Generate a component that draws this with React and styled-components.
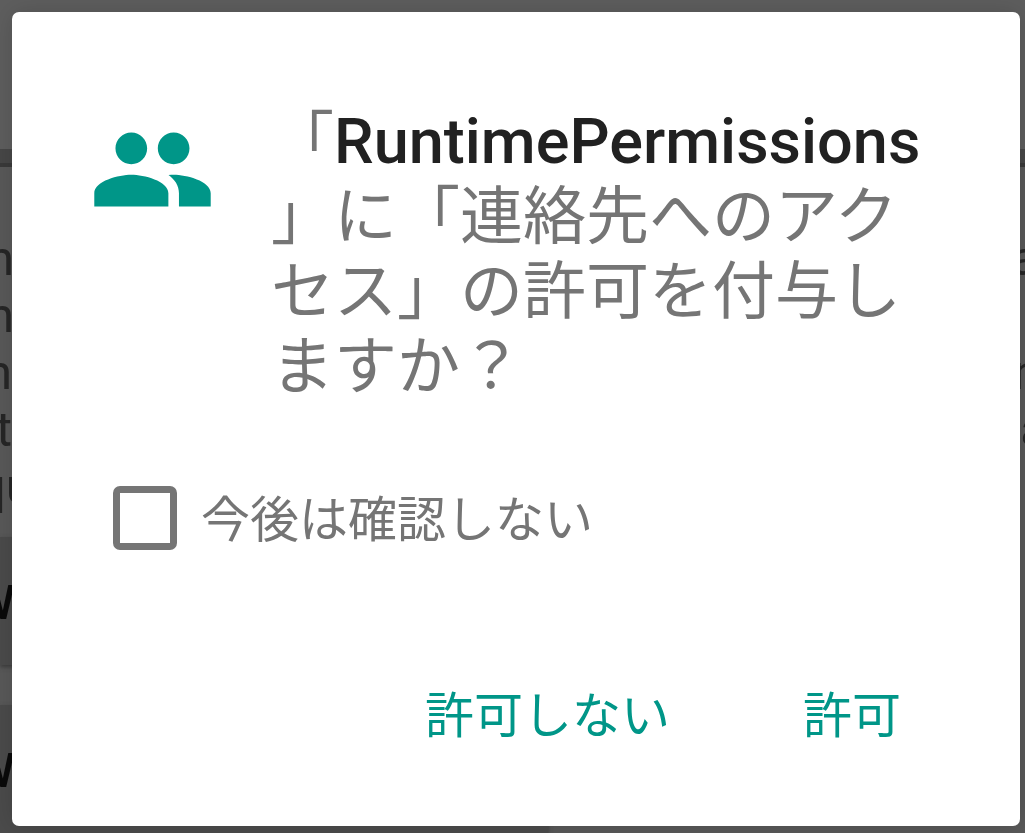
import React from "react";
import styled, { createGlobalStyle } from "styled-components";

const Global = createGlobalStyle`
  *, *::before, *::after { box-sizing: border-box; }
  body { margin: 0; background: #595959; font-family: Roboto, "Noto Sans CJK JP", sans-serif; }
`;

const Screen = styled.div`
  display: grid;
  min-height: 100vh;
  overflow: hidden;
  > * { grid-area: 1 / 1; min-width: 0; }
`;

const Backdrop = styled.div`
  overflow: hidden;
  background: #595959;
`;

const AppBar = styled.div`
  height: 149px;
  background: #5e5e5e;
`;

const Divider = styled.div`
  height: 18px;
  background: #474747;
  border-bottom: 4px solid #3a3a3a;
`;

const Copy = styled.div`
  padding-top: 63px;
  height: 370px;
  color: #262626;
  font-size: 49px;
  line-height: 57px;
`;

const CopyLine = styled.div`
  display: flex;
  justify-content: space-between;
  height: 57px;
  white-space: nowrap;
`;

const Fragment = styled.span`
  margin-left: ${(p) => p.$start || 0}px;
  margin-right: ${(p) => p.$end || 0}px;
`;

const Panel = styled.div`
  width: 548px;
  height: 128px;
  margin-bottom: 40px;
  background: #4b4b4b;
  box-shadow: 0 2px 4px #3c3c3c;
  color: #0a0a0a;
  font-size: 49px;
  font-weight: 500;
  line-height: 132px;
  text-indent: -28px;
`;

const Dialog = styled.section`
  position: relative;
  display: flex;
  flex-direction: column;
  align-self: start;
  margin: 12px 5px 7px 12px;
  padding: 92px 80px 73px 77px;
  border-radius: 7px;
  background: #fff;
  color: #757575;
  box-shadow: 0 0 24px rgba(0, 0, 0, 0.15);
`;

const Heading = styled.div`
  display: flex;
  gap: 55px;
`;

const PeopleIcon = styled.svg`
  flex: none;
  width: 127px;
  height: 127px;
  margin-top: 2px;
  fill: #009688;
`;

const Title = styled.h1`
  margin: 0;
  font-size: 63px;
  font-weight: 400;
  line-height: 75px;
  white-space: nowrap;
`;

const AppName = styled.strong`
  color: #212121;
  font-weight: 500;
`;

const Option = styled.label`
  display: flex;
  align-items: center;
  align-self: start;
  gap: 24px;
  margin: 75px 0 0 24px;
  font-size: 49px;
  line-height: 72px;
`;

const OptionText = styled.span`
  padding-top: 6px;
`;

const Checkbox = styled.input`
  appearance: none;
  width: 64px;
  height: 64px;
  margin: 0;
  border: 7px solid #757575;
  border-radius: 7px;
  &:checked { background: #009688; }
`;

const Actions = styled.div`
  display: flex;
  justify-content: flex-end;
  gap: 85px;
  margin-top: 124px;
  padding-right: 15px;
`;

const Action = styled.button`
  padding: 0 24px;
  border: 0;
  background: none;
  color: #009688;
  font: inherit;
  font-size: 49px;
  line-height: 72px;
`;

export default function App() {
  return (
    <Screen>
      <Global />
      <Backdrop aria-hidden="true">
        <AppBar />
        <Divider />
        <Copy>
          <CopyLine><Fragment $start={-13}>n</Fragment><Fragment $end={-13}>a</Fragment></CopyLine>
          <CopyLine><Fragment $start={-13}>n</Fragment></CopyLine>
          <CopyLine><Fragment $start={-15}>n</Fragment><Fragment $end={-15}>n</Fragment></CopyLine>
          <CopyLine><Fragment $start={-4}>t</Fragment><Fragment $end={-22}>a</Fragment></CopyLine>
          <CopyLine><Fragment $start={-22}>qu</Fragment></CopyLine>
        </Copy>
        <Panel>W</Panel>
        <Panel>W</Panel>
      </Backdrop>
      <Dialog role="dialog" aria-labelledby="title">
        <Heading>
          <PeopleIcon viewBox="0 0 24 24" aria-hidden="true">
            <path d="M16 11c1.66 0 2.99-1.34 2.99-3S17.66 5 16 5s-3 1.34-3 3 1.34 3 3 3zm-8 0c1.66 0 2.99-1.34 2.99-3S9.66 5 8 5 5 6.34 5 8s1.34 3 3 3zm0 2c-2.33 0-7 1.17-7 3.5V19h14v-2.5c0-2.33-4.67-3.5-7-3.5zm8 0c-.29 0-.62.02-.97.05 1.16.84 1.97 1.97 1.97 3.45V19h6v-2.5c0-2.33-4.67-3.5-7-3.5z" />
          </PeopleIcon>
          <Title id="title">
            「<AppName>RuntimePermissions</AppName><br />
            」に「連絡先へのアク<br />
            セス」の許可を付与し<br />
            ますか？
          </Title>
        </Heading>
        <Option>
          <Checkbox type="checkbox" />
          <OptionText>今後は確認しない</OptionText>
        </Option>
        <Actions>
          <Action type="button">許可しない</Action>
          <Action type="button">許可</Action>
        </Actions>
      </Dialog>
    </Screen>
  );
}
